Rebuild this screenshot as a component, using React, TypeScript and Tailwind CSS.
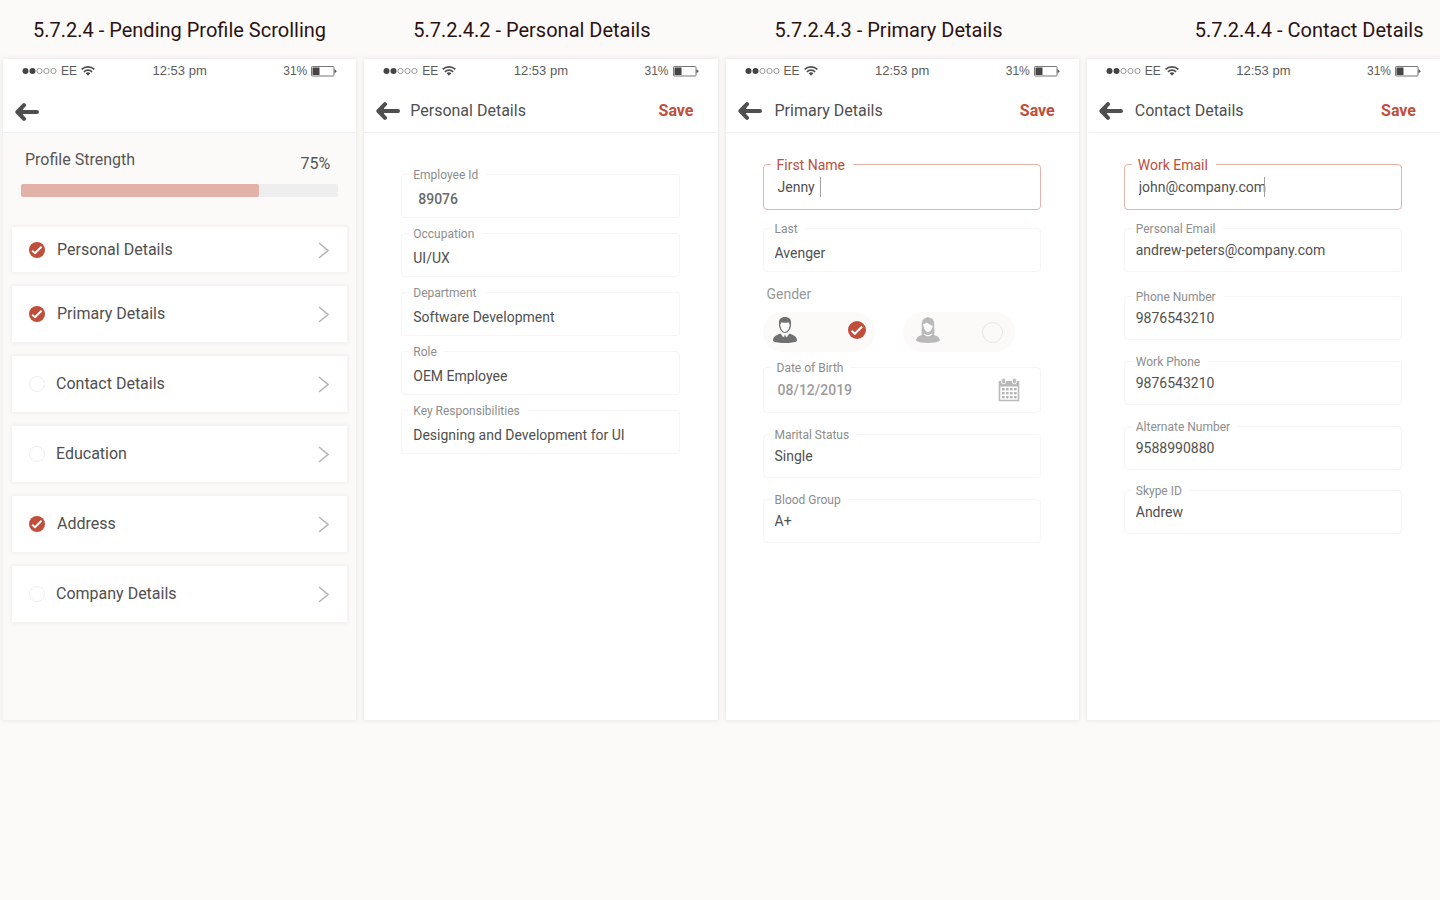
import type { ReactNode } from "react";

function StatusBar() {
  return (
    <div className="grid grid-cols-3 items-center pl-[19px] pr-[19px] pt-1 text-xs leading-4 text-[#5c5c5c] font-['Liberation_Sans',Arial,sans-serif]">
      <div className="flex items-center gap-1">
        <svg width="35" height="8" viewBox="0 0 35 8" aria-hidden="true">
          <circle cx="3.5" cy="4" r="3" fill="#444" />
          <circle cx="10.5" cy="4" r="3" fill="#444" />
          <circle cx="17.5" cy="4" r="2.6" fill="none" stroke="#8a8a8a" strokeWidth="0.9" />
          <circle cx="24.5" cy="4" r="2.6" fill="none" stroke="#8a8a8a" strokeWidth="0.9" />
          <circle cx="31.5" cy="4" r="2.6" fill="none" stroke="#8a8a8a" strokeWidth="0.9" />
        </svg>
        <span>EE</span>
        <svg width="14" height="10" viewBox="0 0 14 10" fill="none" stroke="#4f4f4f" aria-hidden="true">
          <path d="M0.6 3.4C4.2 0 9.8 0 13.4 3.4" strokeWidth="1.7" />
          <path d="M2.9 5.8C5.2 3.6 8.8 3.6 11.1 5.8" strokeWidth="1.7" />
          <path d="M4.6 7.3C6 6 8 6 9.4 7.3L7 9.7Z" fill="#4f4f4f" stroke="none" />
        </svg>
      </div>
      <span className="text-center text-[13px]">12:53 pm</span>
      <div className="flex items-center justify-end gap-1">
        <span>31%</span>
        <svg width="26" height="11" viewBox="0 0 26 11" aria-hidden="true">
          <rect x="0.5" y="0.5" width="22.5" height="9.5" rx="0.8" fill="none" stroke="#777" />
          <rect x="1.5" y="1.5" width="7" height="7.5" fill="#444" />
          <path d="M23.5 3L25.8 5.2L23.5 7.5Z" fill="#555" />
        </svg>
      </div>
    </div>
  );
}

function BackArrow() {
  return (
    <svg width="24" height="18" viewBox="0 0 24 18" fill="none" stroke="#4f4f4f" strokeLinecap="round" strokeLinejoin="round" aria-hidden="true">
      <path d="M3 9H22" strokeWidth="4" />
      <path d="M9 2.2L2.4 9L9 15.8" strokeWidth="4" />
      <path d="M8 5L4 9L8 13Z" fill="#4f4f4f" stroke="none" />
    </svg>
  );
}

function CheckMark({ size }: { size: number }) {
  return (
    <svg width={size} height={size} viewBox="0 0 16 16" className="pointer-events-none" aria-hidden="true">
      <circle cx="8" cy="8" r="8" fill="#c14e3b" />
      <path d="M3.2 8.7L6 11.3L12.6 4.8" fill="none" stroke="#fff" strokeWidth="1.9" />
    </svg>
  );
}

function Screen({ caption, captionClass, children, className }: {
  caption: string;
  captionClass: string;
  children: ReactNode;
  className: string;
}) {
  return (
    <section className="flex min-w-0 flex-col">
      <h2 className={`h-[59px] whitespace-nowrap pt-4 text-xl leading-7 text-[#2b1212] ${captionClass}`}>{caption}</h2>
      <div className={`min-h-[661px] flex-1 shadow-[0_0_4px_1px_rgba(60,40,20,0.08)] ${className}`}>{children}</div>
    </section>
  );
}

function FormHeader({ title, titleClass }: { title: string; titleClass: string }) {
  return (
    <header className="h-[74px] border-b border-[#f1f1f1]">
      <StatusBar />
      <div className="flex items-center pl-3 pr-6 pt-[19px] text-base leading-6">
        <button type="button" aria-label="Back"><BackArrow /></button>
        <h3 className={`flex-1 text-[#4f4f4f] ${titleClass}`}>{title}</h3>
        <button type="button" className="pt-px font-bold text-[#c14e3b]">Save</button>
      </div>
    </header>
  );
}

function Field({ id, label, value, active, strong, muted, low, caret, children }: {
  id: string;
  label: string;
  value: string;
  active?: boolean;
  strong?: boolean;
  muted?: boolean;
  low?: boolean;
  caret?: string;
  children?: ReactNode;
}) {
  const tall = active || muted;
  return (
    <div className={`relative flex rounded-[4px] border ${tall ? "h-[46px]" : "h-11"} ${active ? "border-[#e6b3aa]" : "border-[#f5f5f5]"}`}>
      <label
        htmlFor={id}
        className={`absolute -top-2 left-[7px] bg-white pr-2 leading-4 ${tall ? "pl-1.5" : "pl-1"} ${active ? "text-sm text-[#c14e3b]" : "text-xs text-[#8d8d8d]"}`}
      >
        {label}
      </label>
      <input
        id={id}
        defaultValue={value}
        className={`min-w-0 flex-1 bg-transparent text-sm outline-none ${low ? "pt-1.5" : "pt-0"} ${
          tall ? "pl-3.5" : strong ? "pl-4" : "pl-[11px]"
        } ${strong ? "font-medium text-[#6a6a6a]" : muted ? "font-medium text-[#9c9c9c]" : "text-[#505050]"}`}
      />
      {caret && <span className={`absolute top-3 h-5 w-px bg-[#a0a0a0] ${caret}`} />}
      {children}
    </div>
  );
}

const sections = [
  { name: "Personal Details", done: true },
  { name: "Primary Details", done: true },
  { name: "Contact Details", done: false },
  { name: "Education", done: false },
  { name: "Address", done: true },
  { name: "Company Details", done: false },
];

function Male() {
  return (
    <svg width="26" height="28" viewBox="0 0 26 28" aria-hidden="true">
      <path d="M1 25C1 20 4 19.5 8.5 17.5L13 22L17.5 17.5C22 19.5 25 20 25 25C21 27.8 5 27.8 1 25Z" fill="#707070" />
      <path d="M7 8C6.5 3 9 1 13 1C17 1 19.5 3 19 8L19 10C18.3 13.4 16 17 13 17C10 17 7.7 13.4 7 10Z" fill="#707070" />
      <path d="M8.3 8.5C8.8 7.8 9 7 9.3 6.2C12 7 14.5 6.8 16.7 6.2C17 7 17.2 7.8 17.7 8.5C17.8 11.8 15.6 15.9 13 15.9C10.4 15.9 8.2 11.8 8.3 8.5Z" fill="#fff" />
      <path d="M9 17.3L12.4 19.4L11 21.2ZM17 17.3L13.6 19.4L15 21.2Z" fill="#fff" />
      <path d="M12.4 19.2H13.6L14.2 24L13 25L11.8 24Z" fill="#707070" />
    </svg>
  );
}

function Female() {
  return (
    <svg width="26" height="28" viewBox="0 0 26 28" aria-hidden="true">
      <path d="M1.2 24.8C1.2 21 3.5 20.4 7.5 18.8C5.8 18.2 7 14 6.8 8C6.8 4 9 1.8 12 1.4C12.4 0.8 13.2 0.8 13.8 1.4C17.5 1.8 19.2 4.4 19.2 8C19.2 14 20.2 18.2 18.5 18.8C22.5 20.4 24.8 21 24.8 24.8C20.5 27.8 5.5 27.8 1.2 24.8Z" fill="#b9b9b9" />
      <path d="M8.3 8C10 7.8 11 7.3 11.8 6.6C13.6 8.2 15.6 9.4 17.7 9.8C17.5 12.8 15.5 16 13 16C10.5 16 8.3 12 8.3 8Z" fill="#fff" />
      <path d="M9 17.3C11 19.5 15 19.5 17 17.3L17.3 18.4C15 20.8 11 20.8 8.7 18.4Z" fill="#fff" />
    </svg>
  );
}

function GenderOption({ label, checked, children }: { label: string; checked?: boolean; children: ReactNode }) {
  return (
    <label className={`flex h-10 w-28 items-center justify-between rounded-full bg-[#fbfaf9] ${checked ? "pl-[9px] pr-[9px]" : "pl-3 pr-3"}`}>
      <span className="pb-1">{children}</span>
      <span className="grid place-items-center">
        <input
          type="radio"
          name="gender"
          aria-label={label}
          defaultChecked={checked}
          className={`appearance-none rounded-full border border-[#e6e6e6] [grid-area:1/1] checked:border-transparent ${checked ? "size-[18px]" : "size-[21px]"}`}
        />
        {checked && <span className="pb-1 [grid-area:1/1]"><CheckMark size={18} /></span>}
      </span>
    </label>
  );
}

function CalendarIcon() {
  return (
    <svg width="22" height="24" viewBox="0 0 22 24" aria-hidden="true">
      <path d="M0.7 3H21.3V23.3H0.7ZM2.3 8.5V21.7H19.7V8.5Z" fill="#b9b9b9" fillRule="evenodd" />
      <rect x="3.7" y="0.3" width="3.8" height="5.4" rx="1.6" fill="#b9b9b9" stroke="#fff" strokeWidth="0.9" />
      <rect x="14.5" y="0.3" width="3.8" height="5.4" rx="1.6" fill="#b9b9b9" stroke="#fff" strokeWidth="0.9" />
      {[10, 14, 18].map((y) =>
        [4, 8, 12, 16].map((x) => <rect key={`${x}-${y}`} x={x} y={y} width="2.6" height="2.4" fill="#b5b5b5" />),
      )}
    </svg>
  );
}

export default function App() {
  return (
    <main className="grid min-h-screen grid-cols-4 content-start gap-2 overflow-x-hidden bg-[#fbfaf8] pl-[3px] font-['Roboto',sans-serif]">
      <Screen caption="5.7.2.4 - Pending Profile Scrolling" captionClass="pl-[30px]" className="bg-[#fbfaf8]">
        <header className="h-[74px] border-b border-[#efefef] bg-white">
          <StatusBar />
          <div className="flex pl-3 pt-6">
            <button type="button" aria-label="Back"><BackArrow /></button>
          </div>
        </header>
        <div className="pl-[18px] pr-[18px] pt-[15px]">
          <div className="flex justify-between pl-1 pr-2 text-base leading-6 text-[#555]">
            <span id="strength">Profile Strength</span>
            <span className="pt-1">75%</span>
          </div>
          <div role="progressbar" aria-labelledby="strength" aria-valuenow={75} className="mt-2 h-[13px] rounded-[2px] bg-[#eeeeee]">
            <div className="h-full w-3/4 rounded-[2px] bg-[#e2b2a8]" />
          </div>
        </div>
        <nav className="flex flex-col gap-3.5 px-[9px] pt-[30px]">
          {sections.map((s, i) => (
            <button
              key={s.name}
              type="button"
              className={`flex items-center bg-white pl-[17px] pr-[18px] text-left text-base leading-6 text-[#4f4f4f] shadow-[0_0_4px_1px_rgba(60,40,20,0.06)] ${i === 0 ? "h-[45px]" : "h-14"}`}
            >
              {s.done ? <CheckMark size={16} /> : <span className="size-4 rounded-full border border-[#eeeeee]" />}
              <span className={`flex-1 ${s.done ? "pl-3" : "pl-[11px]"}`}>{s.name}</span>
              <svg width="12" height="18" viewBox="0 0 12 18" fill="none" stroke="#b5b5b5" strokeWidth="1.6" aria-hidden="true">
                <path d="M2 2L11 9.5L2 17" />
              </svg>
            </button>
          ))}
        </nav>
      </Screen>

      <Screen caption="5.7.2.4.2 - Personal Details" captionClass="pl-[49px]" className="bg-white">
        <FormHeader title="Personal Details" titleClass="pl-2.5" />
        <form className="flex flex-col gap-[15px] pl-[37px] pr-[38px] pt-[41px]">
          <Field id="employee-id" label="Employee Id" value="89076" strong low />
          <Field id="occupation" label="Occupation" value="UI/UX" low />
          <Field id="department" label="Department" value="Software Development" low />
          <Field id="role" label="Role" value="OEM Employee" low />
          <Field id="responsibilities" label="Key Responsibilities" value="Designing and Development for UI" low />
        </form>
      </Screen>

      <Screen caption="5.7.2.4.3 - Primary Details" captionClass="pl-[49px]" className="bg-white">
        <FormHeader title="Primary Details" titleClass="pl-[13px]" />
        <form className="flex flex-col pl-[37px] pr-[38px] pt-[31px]">
          <div className="flex flex-col gap-[18px]">
            <Field id="first-name" label="First Name" value="Jenny" active caret="left-14" />
            <Field id="last-name" label="Last" value="Avenger" low />
          </div>
          <div role="radiogroup" aria-labelledby="gender" className="pb-[15px] pt-3">
            <span id="gender" className="block pl-1 text-sm leading-5 text-[#999]">Gender</span>
            <div className="flex gap-7 pt-2">
              <GenderOption label="Male" checked><Male /></GenderOption>
              <GenderOption label="Female"><Female /></GenderOption>
            </div>
          </div>
          <div className="flex flex-col gap-[21px]">
            <Field id="birth" label="Date of Birth" value="08/12/2019" muted>
              <button type="button" aria-label="Pick a date" className="pr-5"><CalendarIcon /></button>
            </Field>
            <Field id="marital" label="Marital Status" value="Single" />
            <Field id="blood" label="Blood Group" value="A+" />
          </div>
        </form>
      </Screen>

      <Screen caption="5.7.2.4.4 - Contact Details" captionClass="pl-[108px]" className="bg-white">
        <FormHeader title="Contact Details" titleClass="pl-3" />
        <form className="flex flex-col pl-[37px] pr-[38px] pt-[31px]">
          <div className="flex flex-col gap-[18px]">
            <Field id="work-email" label="Work Email" value="john@company.com" active caret="left-[139px]" />
            <Field id="personal-email" label="Personal Email" value="andrew-peters@company.com" />
          </div>
          <div className="flex flex-col gap-[21px] pb-5 pt-6">
            <Field id="phone" label="Phone Number" value="9876543210" />
            <Field id="work-phone" label="Work Phone" value="9876543210" />
            <Field id="alternate" label="Alternate Number" value="9588990880" />
          </div>
          <Field id="skype" label="Skype ID" value="Andrew" />
        </form>
      </Screen>
    </main>
  );
}
